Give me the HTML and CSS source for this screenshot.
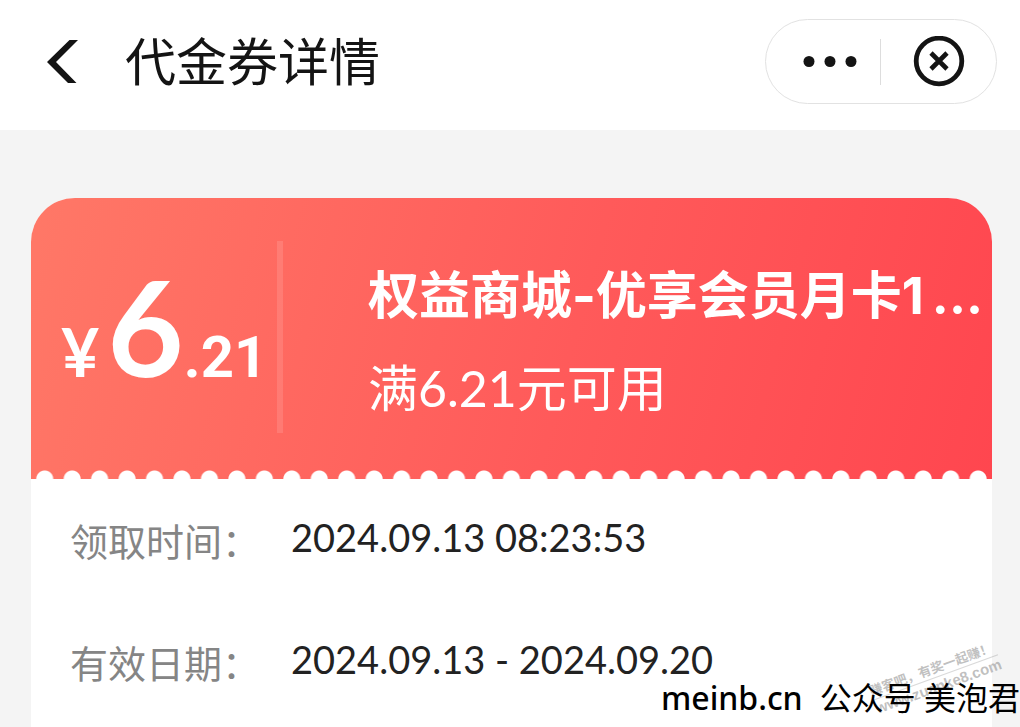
FILE: index.html
```html
<!DOCTYPE html>
<html lang="zh-CN">
<head>
<meta charset="utf-8">
<meta name="viewport" content="width=device-width, initial-scale=1">
<title>代金券详情</title>
<link rel="stylesheet" href="styles.css">
</head>
<body>
<header class="topbar">
  <button class="icon-btn back" type="button" aria-label="返回">
    <svg width="32" height="44" viewBox="0 0 32 44"><path d="M22.500 0H31L9 22L29.500 43H21L0 22Z" fill="#141414"/></svg>
  </button>
  <h1 class="page-title">代金券详情</h1>
  <div class="capsule">
    <button class="icon-btn more" type="button" aria-label="更多">
      <svg width="54" height="12" viewBox="0 0 54 12" fill="#141414"><circle cx="6" cy="5.500" r="5.500"/><circle cx="27" cy="5.500" r="5.500"/><circle cx="48" cy="5.500" r="5.500"/></svg>
    </button>
    <button class="icon-btn close" type="button" aria-label="关闭">
      <svg width="52" height="52" viewBox="0 0 52 52" fill="none" stroke="#141414"><circle cx="26" cy="25" r="22.800" stroke-width="4.800"/><path d="M18 17L34 33M34 17L18 33" stroke-width="4.600"/></svg>
    </button>
  </div>
</header>
<main class="content">
  <article class="coupon">
    <section class="ticket">
      <p class="price"><span class="yen">¥</span><span class="whole">6</span><span class="cents">.21</span></p>
      <div class="summary">
        <h2 class="name">权益商城-优享会员月卡1<span class="more-text">...</span></h2>
        <p class="rule">满6.21元可用</p>
      </div>
    </section>
    <dl class="details">
      <div class="row"><dt>领取时间：</dt><dd>2024.09.13 08:23:53</dd></div>
      <div class="row"><dt>有效日期：</dt><dd>2024.09.13 - 2024.09.20</dd></div>
    </dl>
  </article>
</main>
<div class="stamp"><span class="stamp-slogan">赚客吧，有奖一起赚！</span><span class="stamp-site">www.zuanke8.com</span></div>
<div class="credit"><span>meinb.cn</span><span class="credit-name">公众号 美泡君</span></div>
</body>
</html>
```
FILE: styles.css
```css
* { box-sizing: border-box; }
body {
  margin: 0;
  min-height: 100vh;
  position: relative;
  overflow: hidden;
  display: flex;
  flex-direction: column;
  background: #f4f4f4;
  color: #222;
  font-family: Lato, "Noto Sans CJK SC", sans-serif;
}
h1, h2, p, dl, dd { margin: 0; }
.icon-btn {
  display: flex;
  align-items: center;
  justify-content: center;
  padding: 0;
  border: 0;
  background: none;
}
.topbar {
  display: flex;
  align-items: center;
  height: 130px;
  padding: 0 23px 7px 47px;
  background: #fff;
}
.page-title {
  margin-left: 46px;
  font-size: 51px;
  line-height: 64px;
  font-weight: 400;
  color: #141414;
}
.capsule {
  display: flex;
  width: 232px;
  height: 85px;
  margin-left: auto;
  align-items: center;
  border: 1px solid #e2e2e2;
  border-radius: 43px;
}
.more {
  width: 115px;
  height: 46px;
  padding-left: 14px;
  border-right: 1px solid #ddd;
}
.close { flex: 1; }
.content {
  flex: 1;
  display: flex;
  padding: 68px 28px 0 31px;
}
.coupon {
  flex: 1;
  min-width: 0;
  background: #fff;
  border-radius: 44px 44px 0 0;
}
.ticket {
  display: flex;
  padding: 43px 0 46px;
  border-radius: 44px 44px 0 0;
  color: #fff;
  background:
    radial-gradient(circle 9px at 50% 9px, #fff 8px, transparent 9px) left bottom / calc(100% / 35) 9px repeat-x,
    linear-gradient(105deg, #ff7867 0%, #ff5a5a 56%, #ff464f 100%);
}
.price {
  display: flex;
  align-items: baseline;
  width: 252px;
  height: 192px;
  padding-left: 30px;
  border-right: 6px solid rgba(255, 255, 255, 0.12);
  font-weight: 700;
  line-height: 170px;
}
.yen { font-size: 66px; }
.whole {
  margin-left: 8px;
  font-size: 132px;
}
.cents {
  font-family: Roboto, sans-serif;
  font-size: 58px;
}
.summary {
  flex: 1;
  min-width: 0;
  padding: 21px 0 0 85px;
  white-space: nowrap;
}
.name {
  font-family: Inter, "Noto Sans CJK SC", sans-serif;
  font-size: 51px;
  line-height: 68px;
  font-weight: 700;
}
.more-text { margin-left: 8px; }
.rule {
  margin-top: 24px;
  font-size: 50px;
  line-height: 68px;
}
.details {
  display: flex;
  flex-direction: column;
  gap: 66px;
  padding: 32px 0 0 39px;
}
.row {
  display: flex;
  font-size: 38px;
  line-height: 56px;
}
dt {
  width: 221px;
  padding-top: 4px;
  line-height: 52px;
  color: #858585;
}
dd { line-height: 52px; }
.stamp {
  position: absolute;
  right: 18px;
  bottom: 31px;
  display: flex;
  flex-direction: column;
  font-weight: 700;
  font-size: 13px;
  line-height: 18px;
  color: rgba(130, 130, 130, 0.5);
  transform: rotate(-20deg);
}
.stamp-site {
  border-top: 1px solid rgba(130, 130, 130, 0.3);
  font-family: "Liberation Sans", sans-serif;
  font-size: 15px;
}
.credit {
  position: absolute;
  right: 0;
  bottom: 5px;
  display: flex;
  gap: 17px;
  font-family: "Noto Sans", "Noto Sans CJK SC", sans-serif;
  font-size: 32px;
  line-height: 48px;
  font-weight: 500;
  color: #000;
  white-space: nowrap;
}
.credit-name { font-weight: 400; }
```
